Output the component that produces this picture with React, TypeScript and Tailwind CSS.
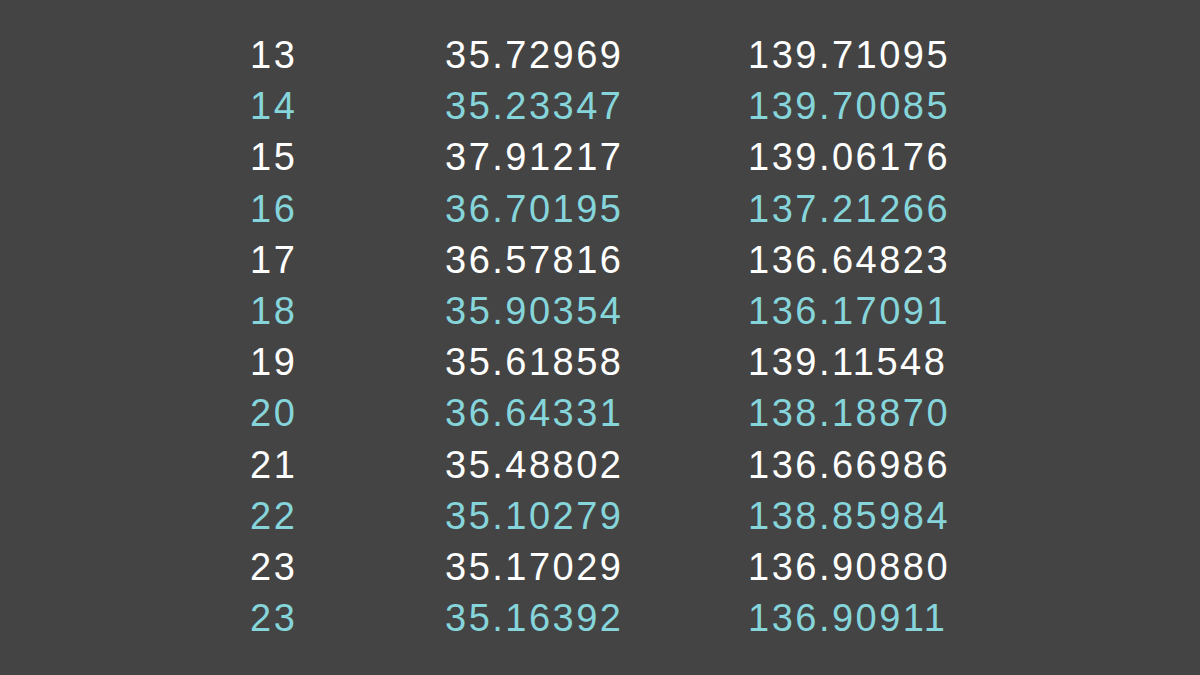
const rows: [string, string, string][] = [
  ["13", "35.72969", "139.71095"],
  ["14", "35.23347", "139.70085"],
  ["15", "37.91217", "139.06176"],
  ["16", "36.70195", "137.21266"],
  ["17", "36.57816", "136.64823"],
  ["18", "35.90354", "136.17091"],
  ["19", "35.61858", "139.11548"],
  ["20", "36.64331", "138.18870"],
  ["21", "35.48802", "136.66986"],
  ["22", "35.10279", "138.85984"],
  ["23", "35.17029", "136.90880"],
  ["23", "35.16392", "136.90911"],
];

export default function App() {
  return (
    <div
      className="w-[1200px] h-[675px] bg-[#444444] overflow-hidden pt-[30px] pl-[250px]"
      style={{ fontFamily: '"Liberation Sans", Arial, sans-serif' }}
    >
      <div className="flex flex-col">
        {rows.map((r, i) => (
          <div
            key={i}
            className={`flex h-[51.2px] leading-[51.2px] text-[38px] tracking-[2.5px] ${
              i % 2 === 0 ? "text-white" : "text-[#85d5db]"
            }`}
          >
            <div className="w-[195px]">{r[0]}</div>
            <div className="w-[303px]">{r[1]}</div>
            <div>{r[2]}</div>
          </div>
        ))}
      </div>
    </div>
  );
}
